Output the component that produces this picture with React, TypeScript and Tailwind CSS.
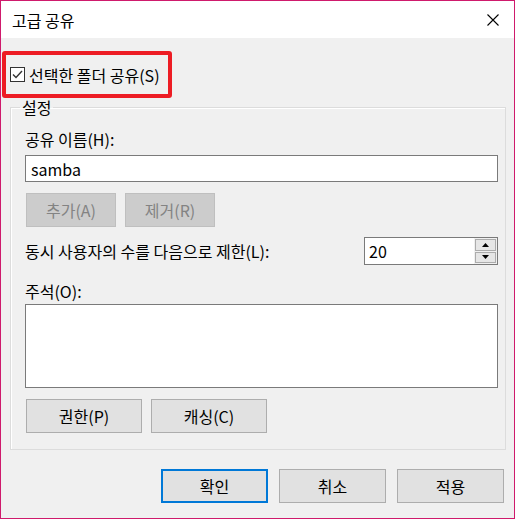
import React from "react";

const font = "font-['Noto_Sans_CJK_KR','Noto_Sans',sans-serif]";

type BtnProps = {
  label: string;
  width: string;
  disabled?: boolean;
  primary?: boolean;
};

const Btn: React.FC<BtnProps> = ({ label, width, disabled, primary }) => {
  let cls = "bg-[#e1e1e1] border border-[#adadad] text-black";
  if (disabled) cls = "bg-[#cccccc] border border-[#bfbfbf] text-[#838383]";
  if (primary) cls = "bg-[#e1e1e1] border-2 border-[#0078d7] text-black";
  return (
    <div className={`${width} h-[34px] flex items-center justify-center leading-[20px] ${cls}`}>
      {label}
    </div>
  );
};

const App: React.FC = () => {
  return (
    <div className={`w-[515px] h-[519px] border border-[#cf1a6c] bg-[#f0f0f0] flex flex-col text-[16px] text-black ${font}`}>
      {/* title bar */}
      <div className="h-[37px] bg-white flex items-center justify-between pl-[11px] pr-[15px] shrink-0">
        <span className="leading-[20px]">고급 공유</span>
        <svg width="12" height="12" viewBox="0 0 12 12">
          <path d="M0.5 0.5 L11.5 11.5 M11.5 0.5 L0.5 11.5" stroke="#000" strokeWidth="1.1" />
        </svg>
      </div>

      {/* share checkbox */}
      <div className="pt-[13px] pl-[1px]">
        <div className="w-[170px] h-[47px] border-4 border-[#ed1c24] rounded-[3px] flex items-center pl-[4px] gap-[4px]">
          <div className="w-[15px] h-[15px] border border-[#333333] bg-white flex items-center justify-center">
            <svg width="13" height="13" viewBox="0 0 13 13">
              <path d="M2 6.5 L5 9.5 L11 3" fill="none" stroke="#333" strokeWidth="1.4" />
            </svg>
          </div>
          <span className="leading-[20px]">선택한 폴더 공유(S)</span>
        </div>
      </div>

      {/* settings group */}
      <fieldset className="ml-[9px] w-[496px] h-[352px] border border-[#dcdcdc] shadow-[inset_1px_1px_0_#ffffff]">
        <legend className="ml-[9px] px-[2px] leading-[18px]">설정</legend>
        <div className="pl-[14px] pr-[7px] flex flex-col">
          <div className="mt-[13px] leading-[20px]">공유 이름(H):</div>
          <div className="mt-[6px] h-[27px] border border-[#7a7a7a] bg-white flex items-center pl-[5px] leading-[20px]">
            samba
          </div>
          <div className="mt-[11px] flex gap-[9px] pl-[1px]">
            <Btn label="추가(A)" width="w-[90px]" disabled />
            <Btn label="제거(R)" width="w-[90px]" disabled />
          </div>
          <div className="mt-[10px] h-[28px] flex items-center justify-between">
            <span className="leading-[20px]">동시 사용자의 수를 다음으로 제한(L):</span>
            <div className="w-[134px] h-[28px] border border-[#7a7a7a] bg-white flex">
              <div className="flex-1 flex items-center pl-[4px] leading-[20px]">20</div>
              <div className="w-[23px] flex flex-col gap-[1px] p-[1px] bg-[#f0f0f0]">
                <div className="flex-1 bg-[#e6e6e6] border border-[#acacac] flex items-center justify-center">
                  <svg width="7" height="4" viewBox="0 0 7 4">
                    <path d="M0 4 L3.5 0 L7 4 Z" fill="#000" />
                  </svg>
                </div>
                <div className="flex-1 bg-[#e6e6e6] border border-[#acacac] flex items-center justify-center">
                  <svg width="7" height="4" viewBox="0 0 7 4">
                    <path d="M0 0 L7 0 L3.5 4 Z" fill="#000" />
                  </svg>
                </div>
              </div>
            </div>
          </div>
          <div className="mt-[16px] leading-[20px]">주석(O):</div>
          <div className="mt-[3px] h-[84px] border border-[#7a7a7a] bg-white" />
          <div className="mt-[11px] flex gap-[9px] pl-[1px]">
            <Btn label="권한(P)" width="w-[116px]" />
            <Btn label="캐싱(C)" width="w-[116px]" />
          </div>
        </div>
      </fieldset>

      {/* dialog buttons */}
      <div className="mt-[19px] flex justify-end gap-[11px] pr-[10px]">
        <Btn label="확인" width="w-[107px]" primary />
        <Btn label="취소" width="w-[107px]" />
        <Btn label="적용" width="w-[107px]" />
      </div>
    </div>
  );
};

export default App;
